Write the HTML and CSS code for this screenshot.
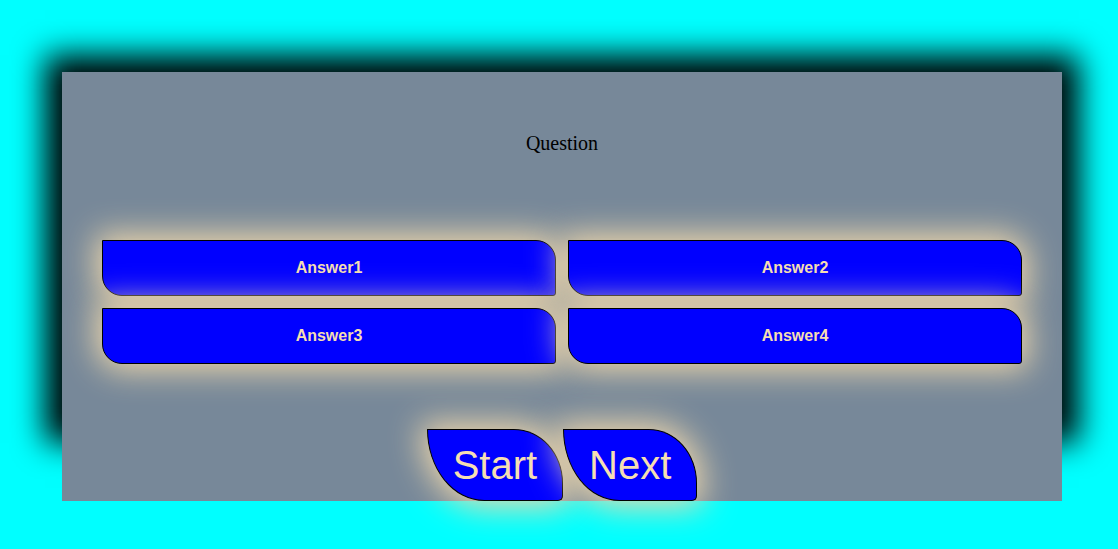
FILE: index.html
```html
<!DOCTYPE html>
<html lang="en">
<head>
<meta charset="utf-8">
<title>Quiz</title>
<link rel="stylesheet" href="styles.css">
</head>
<body>
<div class="frame">
  <div class="panel">
    <div class="question">Question</div>
    <div class="answers">
      <button class="answer">Answer1</button>
      <button class="answer">Answer2</button>
      <button class="answer">Answer3</button>
      <button class="answer">Answer4</button>
    </div>
    <div class="controls">
      <button class="control">Start</button>
      <button class="control">Next</button>
    </div>
  </div>
</div>
</body>
</html>
```

FILE: styles.css
```css
html, body {
  margin: 0;
  padding: 0;
}

body {
  background: #00ffff;
  width: 1118px;
  height: 549px;
  overflow: hidden;
  font-family: "Liberation Serif", "Times New Roman", serif;
}

.frame {
  width: 1000px;
  height: 354px;
  margin: 72px 0 0 62px;
  box-shadow: 0 0 30px 17px #000;
}

.panel {
  background: #778899;
  height: 429px;
  box-sizing: border-box;
  padding: 0 40px;
  display: flex;
  flex-direction: column;
  align-items: center;
}

.question {
  margin-top: 60px;
  height: 23px;
  line-height: 23px;
  font-size: 20px;
  color: #000;
}

.answers {
  margin-top: 85px;
  width: 100%;
  display: grid;
  grid-template-columns: 1fr 1fr;
  gap: 12px;
}

.answer {
  height: 56px;
  margin: 0;
  padding: 0;
  background: #0000ff;
  border: 1px solid #000;
  border-radius: 0 20px 3px 20px;
  color: #f5deb3;
  font-family: "Liberation Sans", Arial, sans-serif;
  font-weight: bold;
  font-size: 16px;
  box-shadow: 0 0 32px 6px #f0d8ac;
}

.controls {
  margin-top: 65px;
  display: flex;
  gap: 0;
}

.control {
  height: 72px;
  margin: 0;
  padding: 0 25px;
  background: #0000ff;
  border: 1px solid #000;
  border-radius: 0 36% 5px 42% / 0 75% 5px 100%;
  color: #f5deb3;
  font-family: "Liberation Sans", Arial, sans-serif;
  font-size: 40px;
  line-height: 46px;
  box-shadow: 0 0 32px 6px #f0d8ac;
}
```
